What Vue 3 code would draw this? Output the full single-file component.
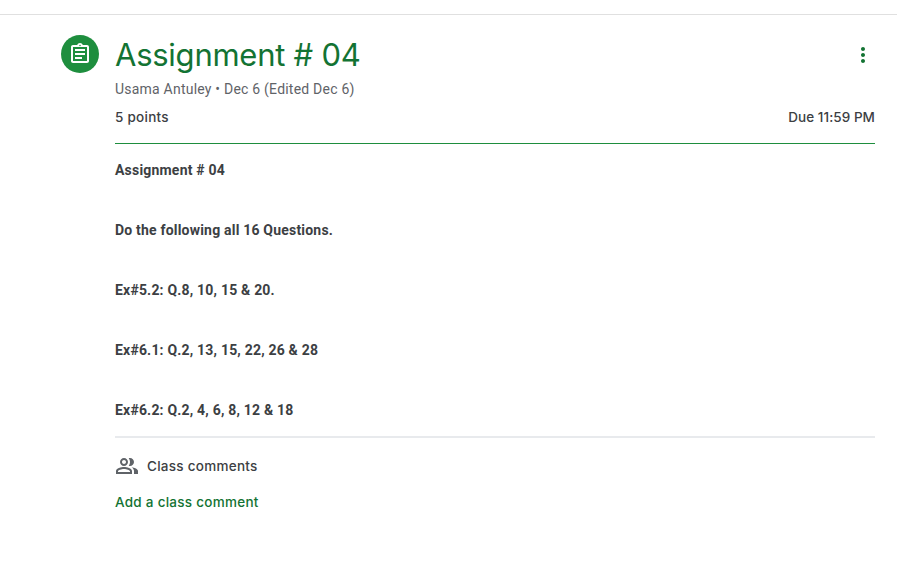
<script setup>
const paragraphs = [
  'Assignment # 04',
  'Do the following all 16 Questions.',
  'Ex#5.2: Q.8, 10, 15 & 20.',
  'Ex#6.1: Q.2, 13, 15, 22, 26 & 28',
  'Ex#6.2: Q.2, 4, 6, 8, 12 & 18',
]
</script>

<template>
  <main class="page">
    <div class="badge">
      <svg width="24" height="24" viewBox="0 0 24 24" fill="#fff">
        <path d="M7 15h7v2H7zm0-4h10v2H7zm0-4h10v2H7z" />
        <path d="M19 3h-4.180C14.400 1.840 13.300 1 12 1c-1.300 0-2.400.840-2.820 2H5c-1.100 0-2 .900-2 2v14c0 1.100.900 2 2 2h14c1.100 0 2-.900 2-2V5c0-1.100-.900-2-2-2zm-7-.250c.410 0 .750.340.750.750s-.340.750-.750.750-.750-.340-.750-.750.340-.750.750-.750zM19 19H5V5h14v14z" />
      </svg>
    </div>
    <article class="content">
      <header class="head">
        <h1>Assignment # 04</h1>
        <svg class="more" width="24" height="24" viewBox="0 0 24 24" fill="#137333">
          <path d="M12 8c1.100 0 2-.900 2-2s-.900-2-2-2-2 .900-2 2 .900 2 2 2zm0 2c-1.100 0-2 .900-2 2s.900 2 2 2 2-.900 2-2-.900-2-2-2zm0 6c-1.100 0-2 .900-2 2s.900 2 2 2 2-.900 2-2-.900-2-2-2z" />
        </svg>
      </header>
      <div class="meta">Usama Antuley • Dec 6 (Edited Dec 6)</div>
      <div class="info">
        <span class="points">5 points</span>
        <span class="due">Due 11:59 PM</span>
      </div>
      <section class="body">
        <p v-for="text in paragraphs" :key="text">{{ text }}</p>
      </section>
      <section class="comments">
        <div class="label">
          <svg width="24" height="24" viewBox="0 0 24 24" fill="#5f6368">
            <path d="M15 8c0-1.420-.500-2.730-1.330-3.760.420-.140.860-.240 1.330-.240 2.210 0 4 1.790 4 4s-1.790 4-4 4c-.430 0-.840-.090-1.230-.210-.030-.010-.060-.020-.100-.030C14.500 10.730 15 9.420 15 8zm1.660 5.130C18.030 14.060 19 15.320 19 17v3h4v-3c0-2.180-3.580-3.470-6.340-3.870zM9 6c-1.100 0-2 .900-2 2s.900 2 2 2 2-.900 2-2-.900-2-2-2m0 9c-2.700 0-5.800 1.290-6 2.010V18h12v-1c-.200-.710-3.300-2-6-2M9 4c2.210 0 4 1.790 4 4s-1.790 4-4 4-4-1.790-4-4 1.790-4 4-4zm0 9c2.670 0 8 1.340 8 4v3H1v-3c0-2.660 5.330-4 8-4z" />
          </svg>
          <span>Class comments</span>
        </div>
        <div class="add">Add a class comment</div>
      </section>
    </article>
  </main>
</template>

<style>
body {
  margin: 0;
  background: #fff;
}
</style>

<style scoped>
.page {
  box-sizing: border-box;
  height: 563px;
  margin-top: 14px;
  border-top: 1px solid #e0e0e0;
  padding: 20px 22px 0 61px;
  display: flex;
  align-items: flex-start;
  gap: 16px;
  font: 14px/20px Roboto, sans-serif;
  color: #3c4043;
}
.badge {
  width: 38px;
  height: 38px;
  border-radius: 50%;
  background: #1e8e3e;
  display: flex;
  align-items: center;
  justify-content: center;
}
.content {
  flex: 1;
}
.head {
  height: 40px;
  display: flex;
  justify-content: space-between;
  align-items: center;
}
h1 {
  margin: 0;
  font: 400 31px/40px Inter, sans-serif;
  letter-spacing: -0.25px;
  color: #137333;
}
.meta {
  margin-top: 4px;
  color: #5f6368;
  letter-spacing: 0.22px;
}
.info {
  display: flex;
  justify-content: space-between;
  height: 45px;
  box-sizing: border-box;
  padding-top: 8px;
  border-bottom: 1px solid #1e8e3e;
}
.info,
.comments {
  font-family: Inter, sans-serif;
  font-size: 13.5px;
  font-weight: 550;
  letter-spacing: 0.27px;
}
.due {
  letter-spacing: 0.05px;
}
.more {
  flex: none;
}
.body {
  padding-top: 16px;
  font-weight: 700;
  letter-spacing: 0.2px;
}
p {
  margin: 0 0 40px;
}
p:last-child {
  margin-bottom: 16px;
}
.comments {
  border-top: 2px solid #e8eaed;
  padding-top: 16px;
}
.label {
  display: flex;
  align-items: center;
  gap: 8px;
}
.add {
  margin-top: 14px;
  color: #137333;
}
</style>
